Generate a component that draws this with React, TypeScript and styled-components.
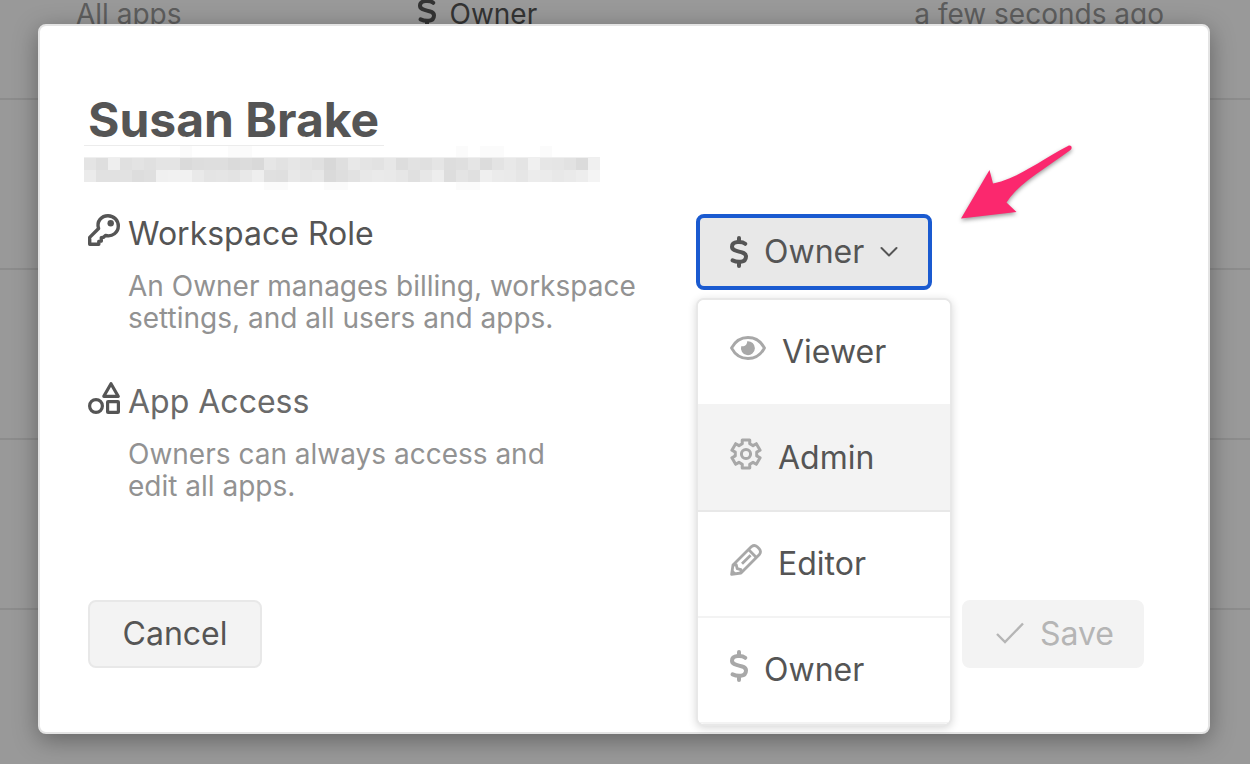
import React from "react";
import styled, { createGlobalStyle } from "styled-components";

const GlobalStyle = createGlobalStyle`
  *, *::before, *::after { box-sizing: border-box; }
  html, body, #root { height: 100%; }
  body {
    margin: 0;
    background: #999999;
    color: #555555;
    font-family: Inter, "Liberation Sans", sans-serif;
    font-size: 32px;
    line-height: 36px;
  }
  button { font: inherit; color: inherit; margin: 0; cursor: pointer; }
  svg { display: block; flex: none; }
`;

/* ---------- icons ---------- */

const DollarIcon = () => (
  <svg width="18" height="32" viewBox="1 0 18 32" fill="none" stroke="currentColor" strokeWidth="4" strokeLinecap="round" strokeLinejoin="round" aria-hidden="true">
    <path d="M10 2v4M10 26v4" />
    <path d="M16.200 7.800C13.500 5.600 3 4.500 3 10.800C3 17.200 17 14 17 20.500C17 27.500 7.500 26.200 3.600 24.400" />
  </svg>
);

const KeyIcon = () => (
  <svg width="32" height="32" viewBox="0 0 32 32" fill="none" stroke="currentColor" strokeWidth="3.400" strokeLinejoin="round" aria-hidden="true">
    <path d="M10.600 14.500C8.200 7.200 13.600 1.700 20 1.700C26 1.700 30.300 6.300 30.300 12C30.300 18.300 24.500 23.300 17.500 21.400L15.600 23.300L13.300 23.600L13.300 27L10.800 27.400L10.800 30.300L1.700 30.300L1.700 23.400Z" />
    <circle cx="22.700" cy="9.300" r="3.200" fill="currentColor" stroke="none" />
  </svg>
);

const ShapesIcon = () => (
  <svg width="32" height="32" viewBox="0 0 32 32" fill="none" stroke="currentColor" strokeWidth="3.200" strokeLinejoin="round" aria-hidden="true">
    <path d="M23 1.700L30.200 14.300H15.800Z" />
    <circle cx="8" cy="24" r="6.400" />
    <rect x="19.600" y="19.600" width="10.800" height="10.800" rx="0.500" />
  </svg>
);

const EyeIcon = () => (
  <svg width="36" height="32" viewBox="0 0 36 32" fill="none" stroke="currentColor" strokeWidth="2.800" strokeLinejoin="round" aria-hidden="true">
    <path d="M1.500 16C5 9.500 11 5.500 18 5.500S31 9.500 34.500 16C31 22.500 25 26.500 18 26.500S5 22.500 1.500 16Z" />
    <path d="M17.200 9.200A7 7 0 1 1 11.200 14.200C14.600 15 17.200 12.600 17.200 9.200Z" fill="currentColor" stroke="none" />
  </svg>
);

const gearOutline = (() => {
  const point = (radius: number, degrees: number) => {
    const a = (degrees * Math.PI) / 180;
    return `${(16 + radius * Math.cos(a)).toFixed(2)} ${(16 + radius * Math.sin(a)).toFixed(2)}`;
  };
  const points: string[] = [];
  for (let tooth = 0; tooth < 6; tooth += 1) {
    const mid = tooth * 60 - 90;
    points.push(point(10.9, mid - 20), point(14.6, mid - 15), point(14.6, mid + 15), point(10.9, mid + 20));
  }
  return `M${points.join("L")}Z`;
})();

const GearIcon = () => (
  <svg width="32" height="32" viewBox="0 0 32 32" fill="none" stroke="currentColor" strokeWidth="3" strokeLinejoin="round" aria-hidden="true">
    <path d={gearOutline} />
    <circle cx="16" cy="16" r="4.600" />
  </svg>
);

const PencilIcon = () => (
  <svg width="32" height="32" viewBox="0 0 32 32" fill="none" stroke="currentColor" strokeWidth="2.800" strokeLinejoin="round" aria-hidden="true">
    <path d="M1.600 30.400L3 21L21.500 2.600Q24.500 0.400 27.200 2.800L29.200 4.800Q31.600 7.500 29.400 10.500L11 29Z" />
    <path d="M18.500 5.600L26.400 13.500M3 21L6.200 20.600L7.200 24.600L11 25.600L11 29M12 19.800L20.600 11.200" />
    <path d="M1 31L2 25L7 30Z" fill="currentColor" stroke="none" />
  </svg>
);

const ChevronIcon = () => (
  <svg width="18" height="12" viewBox="0 0 18 12" fill="none" stroke="currentColor" strokeWidth="2" strokeLinecap="round" strokeLinejoin="round" aria-hidden="true">
    <path d="M1.500 2L9 9.500L16.500 2" />
  </svg>
);

const CheckIcon = () => (
  <svg width="28" height="32" viewBox="0 0 28 32" fill="none" stroke="currentColor" strokeWidth="2.400" aria-hidden="true">
    <path d="M1 16L9 24L27 5.500" />
  </svg>
);

/* ---------- page behind the dialog ---------- */

const Page = styled.div`
  position: relative;
  min-height: 100%;
  overflow: hidden;
`;

const UserTable = styled.table`
  width: 100%;
  margin-top: -71px;
  border-collapse: collapse;
  table-layout: fixed;
  color: #5d5d5d;
  font-size: 28px;
`;

const UserRow = styled.tr`
  height: 170px;
  border-bottom: 2px solid #8c8c8c;
`;

const UserCell = styled.td<{ $width?: string; $align?: string; $strong?: boolean }>`
  width: ${(p) => p.$width ?? "auto"};
  padding: 0 86px 0 76px;
  text-align: ${(p) => p.$align ?? "left"};
  color: ${(p) => (p.$strong ? "#333333" : "inherit")};
  white-space: nowrap;
  &:not(:first-child) { padding-left: 0; }
`;

const CellRole = styled.span`
  display: flex;
  align-items: center;
  gap: 14px;
`;

const CellIcon = styled.span`
  padding-bottom: 6px;
`;

/* ---------- dialog ---------- */

const Overlay = styled.div`
  position: absolute;
  inset: 0;
  display: flex;
  align-items: flex-start;
  padding: 24px 40px 30px 38px;
`;

const Dialog = styled.section`
  position: relative;
  flex: 1;
  min-width: 0;
  padding: 66px 64px 64px 48px;
  background: #ffffff;
  border: 2px solid #e4e4e4;
  border-radius: 8px;
  box-shadow: 0 6px 24px rgba(0, 0, 0, 0.35);
`;

const Title = styled.h1`
  margin: 0;
  font-size: 48px;
  line-height: 56px;
  font-weight: 700;
`;

const HiddenEmail = styled.div`
  margin: -3px 0 23px -4px;
`;

const Columns = styled.div`
  display: grid;
  grid-template-columns: minmax(0, 608px) 1fr;
`;

const Settings = styled.div`
  display: grid;
  gap: 48px;
`;

const Setting = styled.div<{ $measure: string }>`
  display: grid;
  grid-template-columns: 32px ${(p) => p.$measure};
  column-gap: 8px;
  row-gap: 18px;
`;

const SettingTitle = styled.h2<{ $muted?: boolean }>`
  margin: 0;
  padding-top: 2px;
  color: ${(p) => (p.$muted ? "#6a6a6a" : "inherit")};
  font-size: 32px;
  line-height: 36px;
  font-weight: 400;
`;

const SettingText = styled.p`
  grid-column: 2;
  margin: 0;
  color: #929292;
  font-size: 28px;
  line-height: 32px;
`;

const RolePicker = styled.div`
  position: relative;
  justify-self: start;
  align-self: start;
`;

const Trigger = styled.button`
  display: flex;
  align-items: center;
  gap: 16px;
  height: 76px;
  width: 236px;
  padding: 0 28px 0 30px;
  background: #e8e8e8;
  border: 4px solid #1a5ad0;
  border-radius: 8px;
`;

const Menu = styled.div`
  position: absolute;
  top: 100%;
  left: 0;
  z-index: 1;
  width: 256px;
  margin-top: 8px;
  background: #ffffff;
  border: 2px solid #e8e8e8;
  border-radius: 8px;
  box-shadow: 0 2px 8px rgba(0, 0, 0, 0.16);
  overflow: hidden;
`;

const MenuItem = styled.button<{ $active?: boolean }>`
  display: flex;
  align-items: center;
  gap: 16px;
  width: 100%;
  height: 106px;
  padding: 0 32px;
  background: ${(p) => (p.$active ? "#f3f3f3" : "#ffffff")};
  border: 0;
  border-bottom: 2px solid ${(p) => (p.$active ? "#e8e8e8" : "#f3f3f3")};
  text-align: left;
`;

const ItemIcon = styled.span`
  color: #a8a8a8;
  padding-bottom: 8px;
`;

const Actions = styled.footer`
  display: flex;
  justify-content: space-between;
  margin-top: 98px;
`;

const ActionButton = styled.button<{ $border?: string }>`
  display: flex;
  align-items: center;
  justify-content: center;
  gap: 16px;
  min-width: 174px;
  height: 68px;
  padding: 0 32px;
  background: #f3f3f3;
  border: 2px solid ${(p) => p.$border ?? "#f3f3f3"};
  border-radius: 8px;
  &:disabled { color: #b5b5b5; padding: 0 28px 0 32px; cursor: default; }
`;

const ArrowMark = styled.svg`
  position: absolute;
  top: 112px;
  left: 918px;
  filter: drop-shadow(0 2px 2px rgba(0, 0, 0, 0.4));
`;

/* ---------- pixelated address ---------- */

const mosaic = [
  "e4 de ee e0 e3 e0 e4 e4 da dd de de da dc d9 e6 e2 e6 e3 e0 d8 df e8 e4 e2 e7 dd e2 e0 e5 dd df e5 dc e3 e8 e4 f0 e6 e5 e2 db f0",
  "eb e1 e1 e2 dd df f0 f1 f1 e9 e4 e5 e3 e8 ee e0 df e8 e5 e7 da de e2 e8 ea e9 e6 e0 e7 ed dd e4 e0 ef eb ea e6 ec eb e8 ea ed f4",
].map((row) => row.split(" "));

const faintCells = [
  [8, 0], [12, 0], [13, 0], [31, 0], [33, 0], [34, 0], [38, 0],
  [15, 36], [16, 36], [20, 36], [21, 36], [31, 36], [32, 36],
];

const Mosaic = () => (
  <svg width="516" height="46" viewBox="0 0 516 46" role="img" aria-label="Hidden email address" shapeRendering="crispEdges">
    <rect x="0" y="0" width="300" height="1" fill="#ececec" />
    {faintCells.map(([col, y]) => (
      <rect key={`${col}-${y}`} x={col * 12} y={y || 1} width="12" height={y ? 9 : 12} fill="#fbfbfb" />
    ))}
    <rect x="0" y="12" width="516" height="1" fill="#efefef" />
    {mosaic.map((row, r) =>
      row.map((shade, c) => (
        <rect key={`${r}-${c}`} x={c * 12} y={13 + r * 12} width="12" height="12" fill={`#${shade}${shade}${shade}`} />
      ))
    )}
  </svg>
);

const roles = [
  { name: "Viewer", Icon: EyeIcon },
  { name: "Admin", Icon: GearIcon },
  { name: "Editor", Icon: PencilIcon },
  { name: "Owner", Icon: DollarIcon },
];

export default function App() {
  return (
    <Page>
      <GlobalStyle />
      <UserTable>
        <tbody>
          <UserRow>
            <UserCell $width="33.4%">All apps</UserCell>
            <UserCell $strong>
              <CellRole>
                <CellIcon><DollarIcon /></CellIcon>
                Owner
              </CellRole>
            </UserCell>
            <UserCell $align="right">a few seconds ago</UserCell>
          </UserRow>
          {[1, 2, 3, 4].map((n) => (
            <UserRow key={n}>
              <UserCell colSpan={3} />
            </UserRow>
          ))}
        </tbody>
      </UserTable>
      <Overlay>
        <Dialog role="dialog" aria-labelledby="dialog-title">
          <Title id="dialog-title">Susan Brake</Title>
          <HiddenEmail><Mosaic /></HiddenEmail>
          <Columns>
            <Settings>
              <Setting $measure="536px">
                <KeyIcon />
                <SettingTitle>Workspace Role</SettingTitle>
                <SettingText>An Owner manages billing, workspace settings, and all users and apps.</SettingText>
              </Setting>
              <Setting $measure="440px">
                <ShapesIcon />
                <SettingTitle $muted>App Access</SettingTitle>
                <SettingText>Owners can always access and edit all apps.</SettingText>
              </Setting>
            </Settings>
            <RolePicker>
              <Trigger type="button" aria-haspopup="menu" aria-expanded="true">
                <DollarIcon />
                Owner
                <ChevronIcon />
              </Trigger>
              <Menu role="menu">
                {roles.map(({ name, Icon }) => (
                  <MenuItem key={name} type="button" role="menuitem" $active={name === "Admin"}>
                    <ItemIcon><Icon /></ItemIcon>
                    {name}
                  </MenuItem>
                ))}
              </Menu>
            </RolePicker>
          </Columns>
          <Actions>
            <ActionButton type="button" $border="#e8e8e8">Cancel</ActionButton>
            <ActionButton type="button" disabled>
              <CheckIcon />
              Save
            </ActionButton>
          </Actions>
          <ArrowMark width="120" height="86" viewBox="0 0 120 86" aria-hidden="true">
            <path d="M3 80.500L31.500 32L35 45.500C60 40.500 82 22.500 110 8C113 6.500 115 9.500 112.500 12C88 30.500 62 43.500 48.500 64.500L58.500 74Z" fill="#fb286e" />
          </ArrowMark>
        </Dialog>
      </Overlay>
    </Page>
  );
}
